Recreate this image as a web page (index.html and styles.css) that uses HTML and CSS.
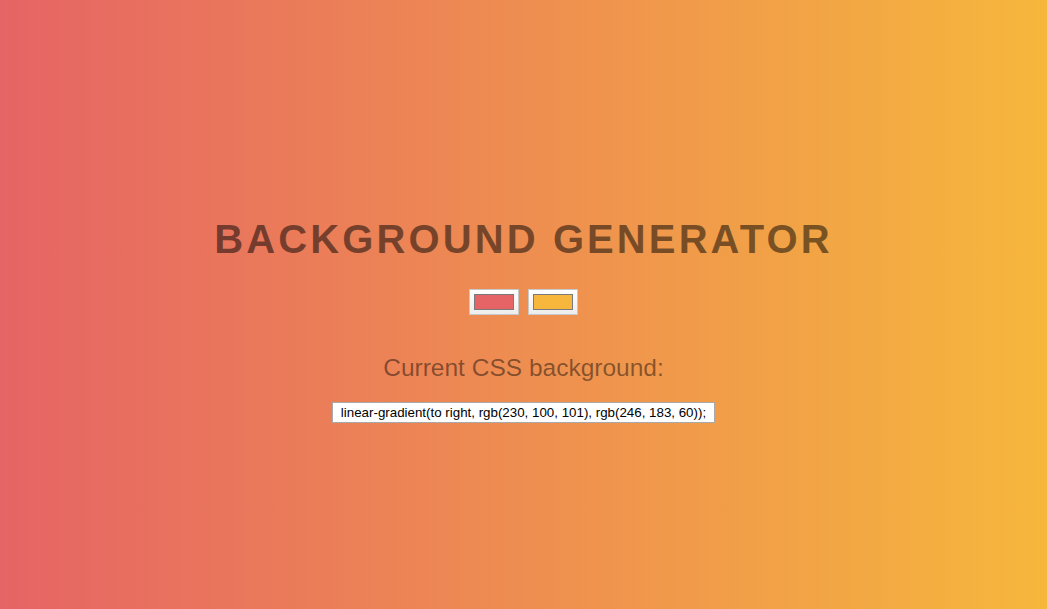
FILE: index.html
```html
<!DOCTYPE html>
<html lang="en">
<head>
<meta charset="utf-8">
<title>Background Generator</title>
<link rel="stylesheet" href="styles.css">
</head>
<body class="page">
  <main class="generator">
    <h1 class="title">Background Generator</h1>
    <div class="pickers">
      <input class="picker" type="color" value="#e66465" aria-label="First colour">
      <input class="picker" type="color" value="#f6b73c" aria-label="Second colour">
    </div>
    <h2 class="subtitle">Current CSS background:</h2>
    <div class="output">linear-gradient(to right, rgb(230, 100, 101), rgb(246, 183, 60));</div>
  </main>
</body>
</html>
```
FILE: styles.css
```css
html, body {
  margin: 0;
  padding: 0;
}

.page {
  min-height: 100vh;
  background: linear-gradient(to right, rgb(230, 100, 101), rgb(246, 183, 60));
  font-family: "Liberation Sans", Arial, sans-serif;
}

.generator {
  display: flex;
  flex-direction: column;
  align-items: center;
  padding-top: 216px;
}

.title {
  margin: 0;
  font-size: 40px;
  line-height: 46px;
  font-weight: bold;
  letter-spacing: 3.1px;
  text-transform: uppercase;
  color: rgba(0, 0, 0, 0.5);
}

.pickers {
  display: flex;
  gap: 9px;
  margin-top: 27px;
}

.picker {
  -webkit-appearance: none;
  appearance: none;
  box-sizing: border-box;
  width: 50px;
  height: 26px;
  margin: 0;
  padding: 4px;
  border: 1px solid #c8c8c8;
  border-radius: 0;
  background: linear-gradient(#ffffff, #ededed);
  cursor: pointer;
}

.picker::-webkit-color-swatch-wrapper {
  padding: 0;
}

.picker::-webkit-color-swatch {
  border: 1px solid #7a7a7a;
  border-radius: 0;
}

.subtitle {
  margin: 39px 0 0;
  font-size: 24.5px;
  line-height: 28px;
  font-weight: normal;
  color: rgba(0, 0, 0, 0.45);
}

.output {
  margin-top: 20px;
  padding: 2px 8px;
  font-size: 13.333px;
  line-height: 15px;
  color: #000;
  background: #fff;
  border: 1px solid #a9a9a9;
}
```
